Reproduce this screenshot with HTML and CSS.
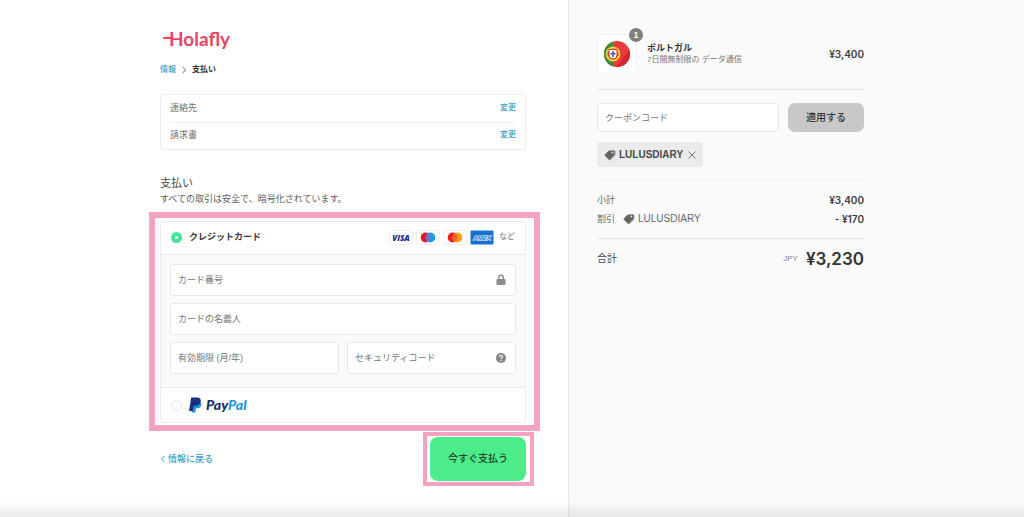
FILE: index.html
```html
<!DOCTYPE html>
<html lang="ja">
<head>
<meta charset="utf-8">
<meta name="viewport" content="width=device-width, initial-scale=1">
<title>Holafly</title>
<link rel="stylesheet" href="styles.css">
</head>
<body>
<div class="page">
  <main class="checkout">
    <div class="checkout-inner">
      <a class="logo" href="#">Holafly</a>
      <nav class="breadcrumb">
        <a class="link" href="#">情報</a>
        <svg class="chevron" viewBox="0 0 6 8"><path d="M1.5 1 4.7 4 1.5 7"/></svg>
        <span class="current">支払い</span>
      </nav>

      <section class="review">
        <div class="review-row"><span>連絡先</span><a class="link change" href="#">変更</a></div>
        <div class="review-row"><span>請求書</span><a class="link change" href="#">変更</a></div>
      </section>

      <h1 class="heading">支払い</h1>
      <p class="subheading">すべての取引は安全で、暗号化されています。</p>

      <section class="methods">
        <div class="highlight highlight-methods"></div>
        <div class="method-head">
          <label class="method-label"><input class="radio" type="radio" name="method" checked><span>クレジットカード</span></label>
          <div class="brands">
            <svg class="brand" viewBox="0 0 24 15" role="img"><rect class="brand-box" x=".5" y=".5" width="23" height="14" rx="1.5"/><text class="visa" x="12" y="10.5">VISA</text></svg>
            <svg class="brand" viewBox="0 0 24 15"><rect class="brand-box" x=".5" y=".5" width="23" height="14" rx="1.5"/><circle cx="9.6" cy="7.5" r="4.9" fill="#eb1428"/><circle cx="14.4" cy="7.5" r="4.9" fill="#14a0e6"/><path d="M12 3.25a4.9 4.9 0 0 1 0 8.5 4.9 4.9 0 0 1 0-8.5" fill="#7470c4"/></svg>
            <svg class="brand" viewBox="0 0 24 15"><rect class="brand-box" x=".5" y=".5" width="23" height="14" rx="1.5"/><circle cx="9.6" cy="7.5" r="4.9" fill="#eb1f24"/><circle cx="14.4" cy="7.5" r="4.9" fill="#f9a01b"/><path d="M12 3.25a4.9 4.9 0 0 1 0 8.5 4.9 4.9 0 0 1 0-8.5" fill="#f26522"/></svg>
            <svg class="brand" viewBox="0 0 24 15" role="img"><rect x=".5" y=".5" width="23" height="14" rx="1" fill="#1671d0"/><text class="amex" x="12" y="10">AMEX</text></svg>
            <span class="etc">など</span>
          </div>
        </div>
        <div class="card-form">
          <div class="field wide">
            <input class="input" type="text" placeholder="カード番号" aria-label="カード番号">
            <svg class="field-icon" viewBox="0 0 10 12"><path d="M2.8 5.5V3.4a2.2 2.2 0 0 1 4.4 0v2.1" fill="none" stroke="#8c8c8c" stroke-width="1.5"/><rect x=".5" y="5" width="9" height="6" rx="1" fill="#8c8c8c"/></svg>
          </div>
          <div class="field wide">
            <input class="input" type="text" placeholder="カードの名義人" aria-label="カードの名義人">
          </div>
          <div class="field">
            <input class="input" type="text" placeholder="有効期限 (月/年)" aria-label="有効期限 (月/年)">
          </div>
          <div class="field">
            <input class="input" type="text" placeholder="セキュリティコード" aria-label="セキュリティコード">
            <svg class="field-icon" viewBox="0 0 10 12"><circle cx="5" cy="6" r="5" fill="#858585"/><path d="M3.5 4.9c0-2.2 3.2-2 3.1-.2 0 1.1-1.5 1.1-1.5 2.2" fill="none" stroke="#fff" stroke-width="1.1"/><rect x="4.5" y="7.8" width="1.2" height="1.2" fill="#fff"/></svg>
          </div>
        </div>
        <div class="method-foot">
          <label class="method-label"><input class="radio" type="radio" name="method" aria-label="PayPal">
            <svg class="paypal" viewBox="0 0 64 16" role="img">
              <path d="M4.500 4.500h6c1.800.5 2.200 2 1.700 3.700-.6 2.300-2.200 3.100-4.400 3.100H6.900L6.200 15.500H2.600z" fill="#179bd7"/>
              <path d="M2.200.500h6c2.800 0 4 1.700 3.500 4.100-.6 2.900-2.600 4.200-5.300 4.200H4.600L3.700 14H0z" fill="#16307f"/>
              <text class="paypal-word" x="17" y="13"><tspan fill="#172c70">Pay</tspan><tspan fill="#1c97de">Pal</tspan></text>
            </svg>
          </label>
        </div>
      </section>

      <div class="actions">
        <a class="link back" href="#"><svg class="chevron-back" viewBox="0 0 6 8"><path d="M4.5 1 1.5 4 4.500 7"/></svg>情報に戻る</a>
        <div class="pay-wrap">
          <div class="highlight highlight-pay"></div>
          <button class="pay" type="button">今すぐ支払う</button>
        </div>
      </div>
    </div>
  </main>

  <aside class="summary">
    <div class="summary-inner">
      <div class="product">
        <div class="thumb">
          <svg class="flag" viewBox="0 0 26 26">
            <defs><clipPath id="disc"><circle cx="13" cy="13" r="13"/></clipPath></defs>
            <g clip-path="url(#disc)">
              <rect width="26" height="26" fill="#ea3a3c"/>
              <path d="M12 26 26 8v18z" fill="#d5262e"/>
              <rect width="9" height="26" fill="#3d8b37"/>
            </g>
            <circle cx="9" cy="13" r="6.500" fill="#c8502f" stroke="#efd43b" stroke-width="1.800"/>
            <path d="M3.500 9.500 14.500 16.500M3.500 16.500 14.500 9.500" stroke="#efd43b" stroke-width="1"/>
            <path d="M5 8.500h8v5.500a4 4 0 0 1-8 0z" fill="#fff" stroke="#d8313a" stroke-width="1"/>
            <path d="M9 10v6M6.500 12.800h5" stroke="#345c9e" stroke-width="1.500"/>
          </svg>
          <span class="badge">1</span>
        </div>
        <div class="product-text">
          <div class="product-name">ポルトガル</div>
          <div class="product-plan">7日間無制限の データ通信</div>
        </div>
        <span class="price">¥3,400</span>
      </div>

      <div class="coupon">
        <div class="coupon-row">
          <input class="input coupon-input" type="text" placeholder="クーポンコード" aria-label="クーポンコード">
          <button class="apply" type="button">適用する</button>
        </div>
        <div class="tag">
          <svg class="tag-icon" viewBox="0 0 12 12"><path d="M2 7.500 6 2.500 10.500 1.200 11.700 2.500 11.300 6.300 6.300 11.300 4.500 10.500z" fill="#999"/><path d="M.300 6.300 4.500 1.800 9.300 1.200 10.300 2.200 9.800 6.200 5.200 10.800z" fill="#626262"/><circle cx="8.300" cy="3.400" r=".9" fill="#eee"/></svg>
          <span>LULUSDIARY</span>
          <button class="remove" type="button" aria-label="LULUSDIARY"><svg class="cross" viewBox="0 0 8 8"><path d="m.5.5 7 7M7.500.5l-7 7"/></svg></button>
        </div>
      </div>

      <div class="totals">
        <div class="line"><span>小計</span><span class="price">¥3,400</span></div>
        <div class="line">
          <span class="discount">割引
            <span class="code"><svg class="tag-icon" viewBox="0 0 12 12"><path d="M2 7.500 6 2.500 10.500 1.200 11.700 2.500 11.300 6.300 6.300 11.300 4.500 10.500z" fill="#999"/><path d="M.300 6.300 4.500 1.800 9.300 1.200 10.300 2.200 9.800 6.200 5.200 10.800z" fill="#626262"/><circle cx="8.300" cy="3.400" r=".9" fill="#eee"/></svg>LULUSDIARY</span>
          </span>
          <span class="price">- ¥170</span>
        </div>
      </div>

      <div class="grand">
        <span class="grand-label">合計</span>
        <span class="currency">JPY</span>
        <span class="grand-price">¥3,230</span>
      </div>
    </div>
  </aside>
  <div class="bottom-shade"></div>
</div>
</body>
</html>
```
FILE: styles.css
```css
* {
  box-sizing: border-box;
}

body {
  margin: 0;
  background: #fff;
  color: #4a4a4a;
  font: 9px/14px "Liberation Sans", "Noto Sans CJK JP", sans-serif;
}

button,
input {
  font: inherit;
  color: inherit;
}

.page {
  position: relative;
  display: grid;
  grid-template-columns: 71fr 57fr;
  min-height: 100vh;
}

.checkout {
  display: flex;
  justify-content: flex-end;
  padding: 27px 42px 32px 20px;
}

.checkout-inner {
  flex: 0 1 366px;
  min-width: 0;
}

.link {
  color: #3a9fc8;
  font-weight: 500;
  text-decoration: none;
}

.logo {
  display: flex;
  width: max-content;
  align-items: center;
  margin-left: 3px;
  color: #e9435f;
  font: bold 19px/24px Lato, sans-serif;
  text-decoration: none;
}

.logo::before {
  content: "";
  width: 10px;
  height: 2px;
  margin: 0 -4px 2px 0;
  border-radius: 1px;
  background: #e9435f;
}

.breadcrumb {
  display: flex;
  align-items: center;
  gap: 5px;
  margin-top: 12px;
  font-size: 8px;
}

.chevron,
.chevron-back {
  width: 6px;
  height: 8px;
  fill: none;
  stroke: #666;
  stroke-width: 1;
}

.current {
  color: #333;
  font-weight: bold;
}

.review {
  margin-top: 17px;
  padding: 0 9px;
  border: 1px solid #ededed;
  border-radius: 3px;
}

.review-row {
  display: flex;
  align-items: center;
  justify-content: space-between;
  height: 27px;
  padding-bottom: 2px;
  color: #707070;
}

.review-row + .review-row {
  border-top: 1px solid #f1f1f1;
}

.change {
  font-size: 8px;
}

.heading {
  margin: 24px 0 0;
  font-size: 11px;
  font-weight: normal;
  line-height: 18px;
}

.subheading {
  margin: 0;
  color: #5c5c5c;
}

.methods {
  position: relative;
  margin-top: 15px;
  border: 1px solid #ededed;
  border-radius: 3px;
}

.highlight {
  position: absolute;
  pointer-events: none;
}

.highlight-methods {
  inset: -10px -15px -9px -12px;
  border: 6px solid #f3a2c1;
}

.highlight-pay {
  inset: -5px -8px -5px -7px;
  border: 4px solid #f3a2c1;
}

.method-head,
.method-foot {
  display: flex;
  align-items: center;
  justify-content: space-between;
  height: 34px;
  padding: 0 10px;
}

.method-head {
  height: 32px;
  padding-bottom: 2px;
}

.method-label {
  display: flex;
  align-items: center;
  gap: 7px;
  color: #333;
  font-weight: bold;
}

.radio {
  appearance: none;
  width: 11px;
  height: 11px;
  margin: 0;
  border: 1px solid #e6e6e6;
  border-radius: 50%;
  background: #fff;
}

.radio:checked {
  border: 4px solid #45e59b;
}

.brands {
  display: flex;
  align-items: center;
  gap: 3px;
}

.brand {
  width: 24px;
  height: 15px;
}

.brand-box {
  fill: #fff;
  stroke: #efefef;
}

.visa {
  fill: #242a86;
  font: italic 800 8px "Open Sans", sans-serif;
  text-anchor: middle;
}

.amex {
  fill: #1671d0;
  stroke: #fff;
  stroke-width: 1;
  paint-order: stroke;
  font: italic bold 6px "Liberation Sans", sans-serif;
  text-anchor: middle;
}

.etc {
  margin-left: 2px;
  color: #777;
  font-size: 8px;
}

.card-form {
  display: grid;
  grid-template-columns: 1fr 1fr;
  gap: 7px 8px;
  padding: 9px 9px 13px;
  border: solid #e9e9e9;
  border-width: 1px 0;
  background: #fafafa;
}

.field {
  position: relative;
}

.wide {
  grid-column: 1 / -1;
}

.input {
  width: 100%;
  height: 32px;
  padding: 0 7px;
  border: 1px solid #e8e8e8;
  border-radius: 3px;
  background: #fff;
}

.input::placeholder {
  color: #757575;
  opacity: 1;
}

.field-icon {
  position: absolute;
  top: 10px;
  right: 10px;
  width: 10px;
  height: 12px;
}

.paypal {
  width: 64px;
  height: 16px;
}

.paypal-word {
  font: italic 900 14px Lato, sans-serif;
}

.actions {
  display: flex;
  align-items: center;
  justify-content: space-between;
  margin-top: 14px;
}

.back {
  display: flex;
  align-items: center;
  gap: 2px;
}

.chevron-back {
  stroke: #3a9fc8;
}

.pay-wrap {
  position: relative;
}

.pay {
  height: 44px;
  padding: 0 18px;
  border: 0;
  border-radius: 8px;
  background: #4dec8b;
  color: #203b2a;
  font-size: 10px;
  font-weight: 500;
}

.summary {
  padding: 34px 20px 32px 28px;
  border-left: 1px solid #e8e8e8;
  background: #fafafa;
}

.summary-inner {
  max-width: 267px;
}

.product {
  display: flex;
  align-items: center;
  gap: 10px;
  padding-bottom: 15px;
  border-bottom: 1px solid #e6e6e6;
}

.thumb {
  position: relative;
  display: grid;
  place-items: center;
  width: 40px;
  height: 40px;
  border: 1px solid #f2f2f2;
  border-radius: 4px;
  background: #fff;
}

.flag {
  width: 26px;
  height: 26px;
}

.badge {
  position: absolute;
  top: -7px;
  right: -7px;
  width: 14px;
  height: 14px;
  border-radius: 50%;
  background: #808080;
  color: #fff;
  font-weight: bold;
  text-align: center;
}

.product-text {
  flex: 1;
  line-height: 12px;
}

.product-name {
  color: #333;
  font-weight: bold;
}

.product-plan {
  color: #777;
  font-size: 8px;
}

.price {
  color: #3d3d3d;
  font: 600 10px/14px Inter, sans-serif;
}

.coupon {
  padding: 13px 0;
  border-bottom: 1px solid #eee;
}

.coupon-row {
  display: flex;
  gap: 9px;
}

.coupon-input {
  flex: 1;
  min-width: 0;
  height: 29px;
}

.apply {
  height: 29px;
  padding: 0 18px;
  border: 0;
  border-radius: 7px;
  background: #c8c8c8;
  color: #333;
  font-size: 10px;
  font-weight: 500;
}

.tag {
  display: flex;
  align-items: center;
  gap: 3px;
  width: max-content;
  height: 25px;
  margin-top: 10px;
  padding: 0 7px;
  border-radius: 3px;
  background: #ebebeb;
  font-size: 10px;
  font-weight: bold;
}

.tag-icon {
  width: 12px;
  height: 12px;
}

.remove {
  display: grid;
  margin-left: 2px;
  padding: 0;
  border: 0;
  background: none;
}

.cross {
  width: 8px;
  height: 8px;
  fill: none;
  stroke: #777;
  stroke-width: 1;
}

.totals {
  display: grid;
  gap: 5px;
  padding: 12px 0;
  border-bottom: 1px solid #e6e6e6;
}

.line,
.discount,
.code {
  display: flex;
  align-items: center;
}

.line {
  justify-content: space-between;
  color: #666;
}

.discount {
  gap: 8px;
}

.code {
  gap: 3px;
  font-size: 10px;
}

.grand {
  display: flex;
  align-items: center;
  gap: 8px;
  padding-top: 8px;
}

.grand-label {
  flex: 1;
  font-size: 10px;
}

.currency {
  color: #888;
  font-size: 8px;
}

.grand-price {
  color: #333;
  font: 600 17px/24px Inter, sans-serif;
}

.bottom-shade {
  position: absolute;
  right: 0;
  bottom: 0;
  left: 0;
  height: 16px;
  background: linear-gradient(rgba(0, 0, 0, 0), rgba(0, 0, 0, 0.08));
  pointer-events: none;
}
```
